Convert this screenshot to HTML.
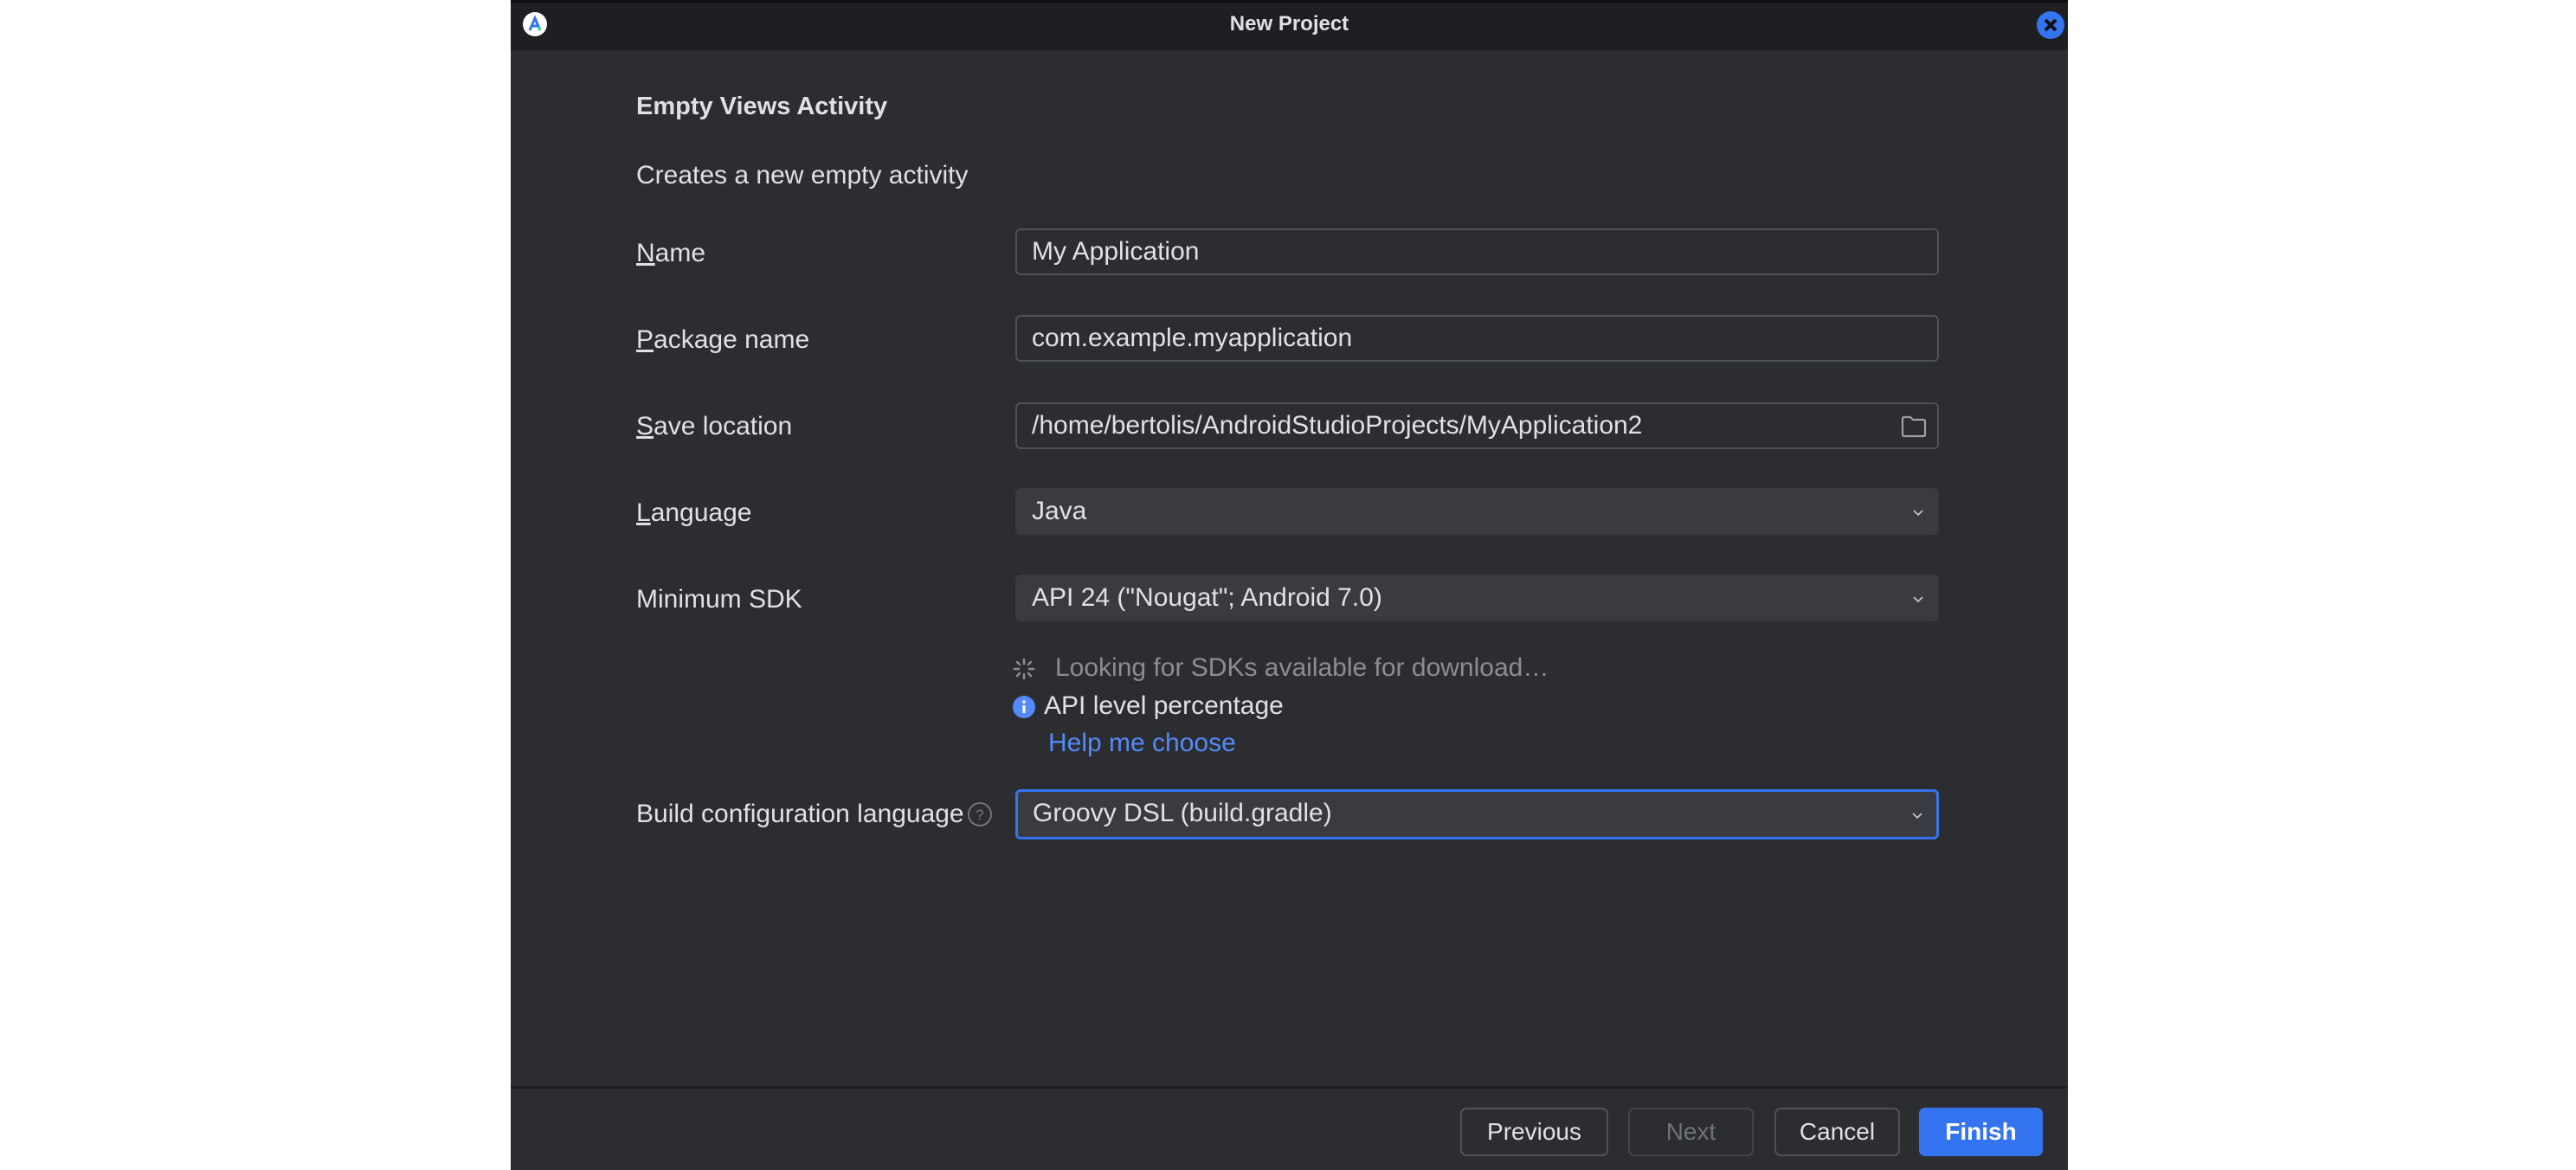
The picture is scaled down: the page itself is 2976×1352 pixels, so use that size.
<!DOCTYPE html>
<html><head><meta charset="utf-8"><style>
*{margin:0;padding:0;box-sizing:border-box}
body{width:2976px;height:1352px;background:#fff;position:relative;overflow:hidden;font-family:"Liberation Sans",sans-serif;}
.dlg{position:absolute;left:590px;top:0;width:1799px;height:1352px;background:#2b2d30;}
.tb{position:absolute;left:0;top:0;width:100%;height:58px;background:#1e1f22;border-top:3px solid #0f0f10}
.t{position:absolute;color:#dfe1e5;font-size:30px;white-space:nowrap}
.lbl{left:145px}
.f{position:absolute;left:583px;width:1067px;height:54px;border:2px solid #4e5157;border-radius:6px;background:#2b2d30;color:#dfe1e5;font-size:30px;line-height:50px;padding-left:17px;white-space:nowrap}
.c{background:#393b40;border-color:#393b40}
.chev{position:absolute;right:16px;top:20px;width:12px;height:12px}
.btn{position:absolute;top:1280px;height:56px;border:2px solid #4e5157;border-radius:7px;color:#dfe1e5;font-size:28px;text-align:center;line-height:52px}
</style></head><body>
<div class="dlg">
 <div class="tb">
  <svg style="position:absolute;left:13px;top:10px" width="30" height="30" viewBox="0 0 30 30"><circle cx="15" cy="15" r="14" fill="#fff"/><path d="M9 22 L15 8 L21 22 M11 17 H19" stroke="#3574f0" stroke-width="3" fill="none"/><circle cx="20" cy="20" r="2" fill="#3ddc84"/></svg>
  <div class="t" style="left:0;width:100%;text-align:center;top:11px;font-weight:bold;font-size:24px">New Project</div>
  <svg style="position:absolute;left:1762px;top:9px" width="34" height="34" viewBox="0 0 34 34"><circle cx="17" cy="17" r="16" fill="#3574f0"/><path d="M11 11 L23 23 M23 11 L11 23" stroke="#111" stroke-width="4"/></svg>
 </div>
 <div class="t" style="left:145px;top:107px;font-weight:bold;font-size:29px">Empty Views Activity</div>
 <div class="t" style="left:145px;top:186px">Creates a new empty activity</div>

 <div class="t lbl" style="top:276px"><u>N</u>ame</div>
 <div class="f" style="top:264px">My Application</div>
 <div class="t lbl" style="top:376px"><u>P</u>ackage name</div>
 <div class="f" style="top:364px">com.example.myapplication</div>
 <div class="t lbl" style="top:476px"><u>S</u>ave location</div>
 <div class="f" style="top:465px">/home/bertolis/AndroidStudioProjects/MyApplication2
  <svg style="position:absolute;right:12px;top:13px" width="30" height="26" viewBox="0 0 30 26"><path d="M2 4 Q2 2 4 2 H11 L14 5 H26 Q28 5 28 7 V22 Q28 24 26 24 H4 Q2 24 2 22 Z" fill="none" stroke="#9da0a8" stroke-width="2.2"/></svg></div>
 <div class="t lbl" style="top:576px"><u>L</u>anguage</div>
 <div class="f c" style="top:564px">Java<svg class="chev" viewBox="0 0 12 12"><path d="M1 4 L6 9 L11 4" stroke="#ccc" stroke-width="1.6" fill="none"/></svg></div>
 <div class="t lbl" style="top:676px">Minimum SDK</div>
 <div class="f c" style="top:664px">API 24 ("Nougat"; Android 7.0)<svg class="chev" viewBox="0 0 12 12"><path d="M1 4 L6 9 L11 4" stroke="#ccc" stroke-width="1.6" fill="none"/></svg></div>

 <svg style="position:absolute;left:579px;top:759px" width="28" height="28" viewBox="0 0 28 28"><g stroke="#8a8d93" stroke-width="2.5" stroke-linecap="round"><path d="M14 3v5M14 20v5M3 14h5M20 14h5M6 6l3 3M19 19l3 3M22 6l-3 3M6 22l3-3"/></g></svg>
 <div class="t" style="left:629px;top:755px;color:#8a8d93">Looking for SDKs available for download…</div>
 <svg style="position:absolute;left:579px;top:803px" width="28" height="28" viewBox="0 0 28 28"><circle cx="14" cy="14" r="13" fill="#548af7"/><rect x="12.5" y="12" width="3" height="9" fill="#fff"/><circle cx="14" cy="8" r="1.8" fill="#fff"/></svg>
 <div class="t" style="left:616px;top:799px">API level percentage</div>
 <div class="t" style="left:621px;top:842px;color:#548af7">Help me choose</div>

 <div class="t lbl" style="top:924px">Build configuration language</div>
 <svg style="position:absolute;left:527px;top:926px" width="30" height="30" viewBox="0 0 30 30"><circle cx="15" cy="15" r="13" fill="none" stroke="#777a80" stroke-width="1.8"/><text x="15" y="21" text-anchor="middle" font-size="17" fill="#777a80" font-family="Liberation Sans">?</text></svg>
 <div class="f c" style="top:912px;height:58px;border:3px solid #3574f0;line-height:50px">Groovy DSL (build.gradle)<svg class="chev" style="top:21px" viewBox="0 0 12 12"><path d="M1 4 L6 9 L11 4" stroke="#ccc" stroke-width="1.6" fill="none"/></svg></div>

 <div style="position:absolute;left:0;top:1255px;width:100%;height:3px;background:#1e1f22"></div>
 <div class="btn" style="left:1097px;width:171px">Previous</div>
 <div class="btn" style="left:1291px;width:145px;color:#6f737a;border-color:#43454a">Next</div>
 <div class="btn" style="left:1460px;width:145px">Cancel</div>
 <div class="btn" style="left:1627px;width:143px;background:#3574f0;border-color:#3574f0;color:#fff;font-weight:bold">Finish</div>
</div>
</body></html>
